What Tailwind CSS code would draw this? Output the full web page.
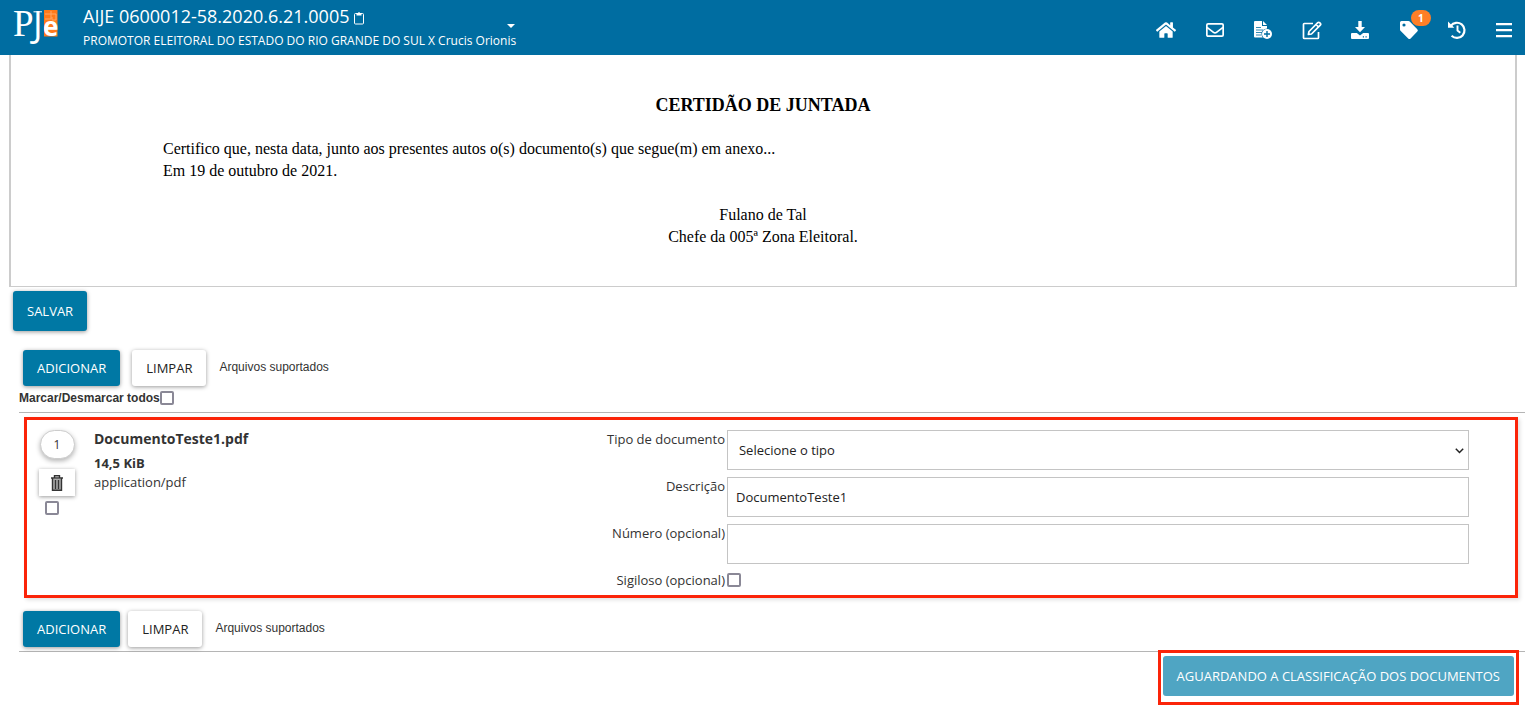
<!DOCTYPE html>
<html lang="pt-BR">
<head>
<meta charset="utf-8">
<title>PJe</title>
<script src="https://cdn.jsdelivr.net/npm/@tailwindcss/browser@4"></script>
</head>
<body class="bg-white font-['Open_Sans',sans-serif] text-[13px] text-[#333]">

<header class="flex h-[55px] justify-between bg-[#006da1] pr-[13px] pl-[13px] text-white">
  <div class="flex">
    <a href="#" aria-label="PJe" class="mr-3 block w-[58px]">
      <svg class="h-[55px] w-[58px] overflow-visible" viewBox="0 0 58 55">
        <rect x="31" y="10" width="13.500" height="26.500" fill="#ff7a1a"/>
        <path d="M32 14h6v5h-6M38 11v3h5v6h-4v-3" fill="none" stroke="#ffa766" stroke-width="1"/>
        <text x="0" y="36" font-family="Liberation Serif, serif" font-size="37" fill="#fff">P</text>
        <path d="M20.500 11.300h8.500v1h-8.500z" fill="#fff"/>
        <text x="20" y="37" font-family="Open Sans, sans-serif" font-size="36" fill="#fff">J</text>
        <text x="30" y="36" font-family="Open Sans, sans-serif" font-weight="700" font-size="26" fill="#fff">e</text>
      </svg>
    </a>
    <div class="relative pt-1">
      <h1 class="flex items-center text-[18px] leading-6">AIJE 0600012-58.2020.6.21.0005
        <button type="button" aria-label="Copiar" class="mt-1 ml-1">
          <svg class="h-[14px] w-3" viewBox="0 0 12 14" fill="none" stroke="#fff"><rect x="1.500" y="2.500" width="9" height="10.500" rx="1"/><path d="M3.500 4.500v-2h1.500a1 1.500 0 0 1 2 0h1.500v2z" fill="#fff" stroke="none"/></svg>
        </button>
      </h1>
      <p class="text-[12px] leading-[26px]">PROMOTOR ELEITORAL DO ESTADO DO RIO GRANDE DO SUL X Crucis Orionis</p>
      <button type="button" aria-label="Mais detalhes" class="absolute top-6 right-px flex">
        <svg class="h-1 w-2" viewBox="0 0 8 4" fill="#fff"><path d="M0 0h8L4 4z"/></svg>
      </button>
    </div>
  </div>
  <nav class="flex w-[356px] items-center justify-between pt-[5px]">
    <a href="#" aria-label="Início"><svg class="size-5" viewBox="0 -32 576 576" fill="#fff"><path d="M280.370 148.260L96 300.110V464a16 16 0 0 0 16 16l112.060-.290a16 16 0 0 0 15.920-16V368a16 16 0 0 1 16-16h64a16 16 0 0 1 16 16v95.640a16 16 0 0 0 16 16.050L464 480a16 16 0 0 0 16-16V300L295.670 148.260a12.190 12.190 0 0 0-15.300 0zM571.600 251.470L488 182.560V44.050a12 12 0 0 0-12-12h-56a12 12 0 0 0-12 12v72.610L318.470 43a48 48 0 0 0-61 0L4.340 251.470a12 12 0 0 0-1.600 16.900l25.500 31A12 12 0 0 0 45.150 301l235.220-193.740a12.190 12.190 0 0 1 15.300 0L530.900 301a12 12 0 0 0 16.900-1.600l25.500-31a12 12 0 0 0-1.700-16.930z"/></svg></a>
    <a href="#" aria-label="Mensagens"><svg class="size-5" viewBox="0 0 20 20" fill="none" stroke="#fff" stroke-width="1.700"><rect x="1.850" y="3.850" width="16.300" height="12.300" rx="1.200"/><path d="M2 7.300l6.500 5q1.500 1.200 3 0l6.500-5"/></svg></a>
    <a href="#" aria-label="Juntar documento"><svg class="size-5" viewBox="0 0 20 20"><path d="M2 1h7v5h5v3.200a5.500 5.500 0 0 0-4 8.300H2a1 1 0 0 1-1-1V2a1 1 0 0 1 1-1zM10 1l4 4h-4z" fill="#fff"/><path d="M3 7.500h5M3 10h7M3 12.500h6M3 15h5" stroke="#006da1" stroke-width=".8"/><circle cx="14" cy="14" r="5.600" fill="#006da1"/><circle cx="14" cy="14" r="5" fill="#fff"/><path d="M14 11v6M11 14h6" stroke="#006da1" stroke-width="1.400"/></svg></a>
    <a href="#" aria-label="Editar"><svg class="size-5" viewBox="0 0 20 20" fill="none" stroke="#fff" stroke-width="1.700" stroke-linejoin="round"><path d="M11 3.500H2.300a.8.8 0 0 0-.8.800v13.400a.8.8 0 0 0 .8.800h13.400a.8.8 0 0 0 .8-.800V12"/><path d="M7 11.500L15.800 2.700a1.300 1.300 0 0 1 1.800 0l.7.700a1.300 1.300 0 0 1 0 1.800L9.500 14l-3.100.500zM14 4.500l2.500 2.500"/></svg></a>
    <a href="#" aria-label="Baixar"><svg class="size-5" viewBox="0 0 20 20" fill="#fff"><path d="M8.300 1h3.400v6H15l-5 5.300L5 7h3.300z"/><path fill-rule="evenodd" d="M2 13h4.800l3.200 2.500L13.200 13H18a1 1 0 0 1 1 1v4a1 1 0 0 1-1 1H2a1 1 0 0 1-1-1v-4a1 1 0 0 1 1-1zm10.800 3.200v1.200H14v-1.200zm2.700 0v1.200h1.200v-1.200z"/></svg></a>
    <a href="#" aria-label="Etiquetas" class="relative"><svg class="size-5" viewBox="0 0 20 20" fill="#fff"><path fill-rule="evenodd" d="M1 2.500A1.500 1.500 0 0 1 2.500 1h7a1.700 1.700 0 0 1 1.200.500l7.600 7.700a1.700 1.700 0 0 1 0 2.400l-6.700 6.800a1.700 1.700 0 0 1-2.400 0L1.500 10.700A1.700 1.700 0 0 1 1 9.500zM5 3.400A1.600 1.600 0 1 0 5 6.600 1.600 1.600 0 1 0 5 3.400z"/></svg>
      <span class="absolute -top-[10px] left-3 flex h-4 w-5 items-center justify-center rounded-full bg-[#ff7f27] text-[10px] font-bold">1</span></a>
    <a href="#" aria-label="Histórico"><svg class="size-5" viewBox="0 0 20 20" fill="none" stroke="#fff" stroke-width="2.200"><path d="M3.800 5.800A7.600 7.600 0 1 1 4.600 15.800"/><path d="M1 1.500v6.300h6.300z" fill="#fff" stroke="none"/><path d="M10.500 5.500v5l2.800 2.200" stroke-width="1.900"/></svg></a>
    <button type="button" aria-label="Menu"><svg class="h-5 w-4" viewBox="0 0 16 20" fill="#fff"><path d="M0 3h16v2.300H0zM0 9h16v2.300H0zM0 15h16v2.300H0z"/></svg></button>
  </nav>
</header>

<main>
  <section class="mr-2 ml-[9px] border-r-2 border-b border-l-2 border-[#ccc] px-[152px] pt-10 pb-[38px] font-['Liberation_Serif',serif] text-[16px] leading-[22px] text-black">
    <h2 class="mb-[23px] text-center text-[18px] leading-[20px] font-bold">CERTIDÃO DE JUNTADA</h2>
    <p>Certifico que, nesta data, junto aos presentes autos o(s) documento(s) que segue(m) em anexo...</p>
    <p>Em 19 de outubro de 2021.</p>
    <p class="mt-[22px] text-center">Fulano de Tal<br>Chefe da 005ª Zona Eleitoral.</p>
  </section>

  <button type="button" class="mt-1 ml-[13px] block h-10 rounded-[3px] bg-[#0078a4] px-[14px] pt-px text-white shadow-[0_1px_4px_rgba(0,0,0,0.4)]">SALVAR</button>

  <section class="ml-[19px]">
    <div class="mt-[19px] flex items-center pl-1">
      <button type="button" class="h-9 rounded-[3px] bg-[#0078a4] px-[14px] pt-px text-white shadow-[0_1px_4px_rgba(0,0,0,0.4)]">ADICIONAR</button>
      <button type="button" class="ml-3 h-9 rounded-[3px] bg-white px-[14px] pt-px text-[#222] shadow-[0_1px_4px_rgba(0,0,0,0.4)]">LIMPAR</button>
      <span class="ml-[13px] pb-[2px] font-['Liberation_Sans',sans-serif] text-[12px]">Arquivos suportados</span>
    </div>
    <div class="mt-1 flex h-[23px] items-start border-b border-[#b5b5b5] font-['Liberation_Sans',sans-serif] text-[12px] leading-4 font-bold">
      <label for="all">Marcar/Desmarcar todos</label>
      <input id="all" type="checkbox" class="mt-px size-[14px] appearance-none rounded-[2px] border-2 border-[#8a8896] bg-white">
    </div>

    <article class="mt-1 mr-[7px] ml-[5px] flex justify-between border-[3px] border-[#fb2409] pt-[10px] pr-[46px] pb-[6px] pl-[11px] shadow-[2px_2px_4px_rgba(0,0,0,0.12)]">
      <div class="flex">
        <div class="flex w-[38px] flex-col items-center">
          <span class="flex h-[29px] w-[35px] items-center justify-center rounded-full border border-[#ccc] bg-white text-[12px] shadow-[0_2px_5px_rgba(0,0,0,0.3)]">1</span>
          <button type="button" aria-label="Excluir" class="mt-[10px] flex h-[27px] w-9 items-center justify-center bg-white shadow-[0_1px_4px_rgba(0,0,0,0.4)]">
            <svg class="h-4 w-[14px]" viewBox="0 0 14 16"><path d="M2 4h10v11.500H2z" fill="#aaa"/><path d="M4.500 2.500V.700h5v1.800M1 3h12M2.500 3.500v11.700h9V3.500M5.500 5v9M8.500 5v9" fill="none" stroke="#333" stroke-width="1.400"/></svg>
          </button>
          <input type="checkbox" aria-label="Selecionar DocumentoTeste1.pdf" class="mt-[5px] mr-[10px] size-[14px] appearance-none rounded-[2px] border-2 border-[#8a8896] bg-white">
        </div>
        <div class="ml-[18px]">
          <h3 class="text-[14px] leading-[18px] font-bold">DocumentoTeste1.pdf</h3>
          <p class="mt-[6px] leading-[18px] font-bold">14,5 KiB</p>
          <p class="leading-5">application/pdf</p>
        </div>
      </div>
      <form class="grid w-3/5 grow-0 basis-[862px] grid-cols-[auto_1fr] items-start gap-x-[2px] gap-y-[7px] leading-[18px]">
        <label for="tipo" class="text-right">Tipo de documento</label>
        <div class="relative">
          <select id="tipo" class="block h-10 w-full appearance-none border border-[#c4c4c4] bg-white px-[11px] text-[#222]"><option>Selecione o tipo</option></select>
          <svg class="pointer-events-none absolute top-[18px] right-[5px] h-[6px] w-[9px]" viewBox="0 0 9 6" fill="none" stroke="#222" stroke-width="1.500"><path d="M.8.800l3.700 3.700L8.200.800"/></svg>
        </div>
        <label for="desc" class="text-right">Descrição</label>
        <input id="desc" type="text" value="DocumentoTeste1" class="h-10 w-full border border-[#c4c4c4] px-2 text-[#222]">
        <label for="num" class="text-right">Número (opcional)</label>
        <input id="num" type="text" class="h-10 w-full border border-[#c4c4c4] px-2 text-[#222]">
        <label for="sig" class="text-right">Sigiloso (opcional)</label>
        <input id="sig" type="checkbox" class="mt-[2px] size-[14px] appearance-none rounded-[2px] border-2 border-[#8a8896] bg-white">
      </form>
    </article>

    <div class="mt-[13px] flex items-center border-b border-[#b5b5b5] pb-1 pl-1">
      <button type="button" class="h-9 rounded-[3px] bg-[#0078a4] px-[14px] pt-px text-white shadow-[0_1px_4px_rgba(0,0,0,0.4)]">ADICIONAR</button>
      <button type="button" class="ml-2 h-9 rounded-[3px] bg-white px-[14px] pt-px text-[#222] shadow-[0_1px_4px_rgba(0,0,0,0.4)]">LIMPAR</button>
      <span class="ml-[13px] pb-[2px] font-['Liberation_Sans',sans-serif] text-[12px]">Arquivos suportados</span>
    </div>
  </section>

  <div class="relative -mt-[2px] mr-[6px] ml-auto w-fit border-[3px] border-[#fb2409] bg-white px-[2px] pt-[3px] pb-[6px]">
    <button type="button" class="block h-10 rounded-[3px] bg-[#4fa5c3] px-[14px] pt-px text-white">AGUARDANDO A CLASSIFICAÇÃO DOS DOCUMENTOS</button>
  </div>
</main>
</body>
</html>
